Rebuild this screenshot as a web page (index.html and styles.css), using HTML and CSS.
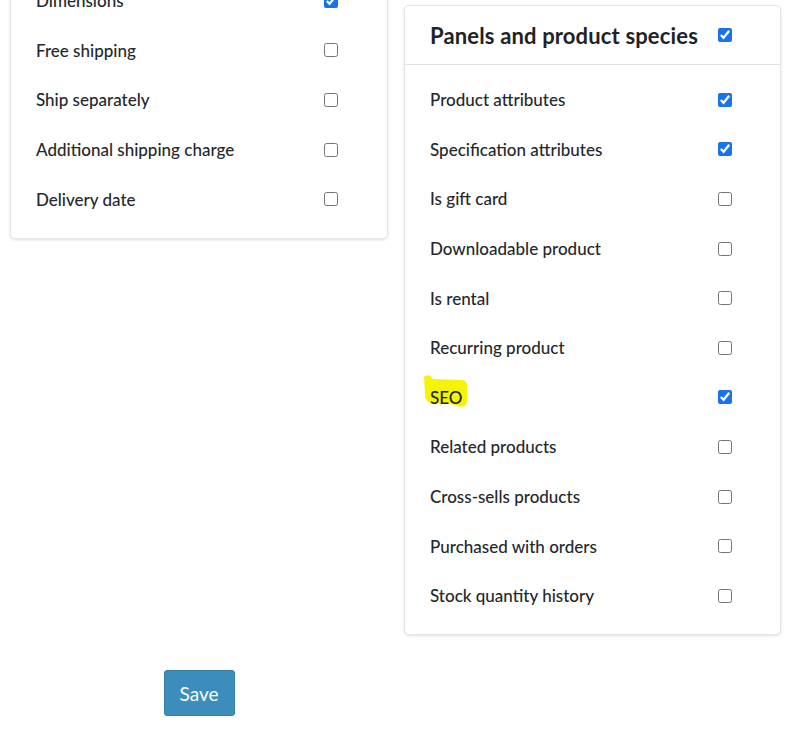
FILE: index.html
```html
<!DOCTYPE html>
<html>
<head>
<meta charset="utf-8">
<link rel="stylesheet" href="styles.css">
</head>
<body>
<div class="page">
  <div class="col col-left">
    <div class="card card-left">
      <div class="card-body">
        <label class="row"><span class="label">Dimensions</span><input type="checkbox" checked></label>
        <label class="row"><span class="label">Free shipping</span><input type="checkbox"></label>
        <label class="row"><span class="label">Ship separately</span><input type="checkbox"></label>
        <label class="row"><span class="label">Additional shipping charge</span><input type="checkbox"></label>
        <label class="row"><span class="label">Delivery date</span><input type="checkbox"></label>
      </div>
    </div>
    <div class="actions"><button class="btn-save" type="button">Save</button></div>
  </div>
  <div class="col col-right">
    <div class="card">
      <div class="card-header">
        <span class="title">Panels and product species</span><input type="checkbox" checked>
      </div>
      <div class="card-body">
        <label class="row"><span class="label">Product attributes</span><input type="checkbox" checked></label>
        <label class="row"><span class="label">Specification attributes</span><input type="checkbox" checked></label>
        <label class="row"><span class="label">Is gift card</span><input type="checkbox"></label>
        <label class="row"><span class="label">Downloadable product</span><input type="checkbox"></label>
        <label class="row"><span class="label">Is rental</span><input type="checkbox"></label>
        <label class="row"><span class="label">Recurring product</span><input type="checkbox"></label>
        <label class="row"><span class="label marked"><svg class="marker" width="50" height="36" viewBox="0 0 50 36"><path d="M3 4 C6 1 10 2 12 6 L40 7 C45 7 47 10 46 16 C47 24 47 30 44 33 C38 35 34 32 30 31 L10 30 C6 29 4 26 4 22 Z" fill="#f6f30a"/></svg><span class="mtext">SEO</span></span><input type="checkbox" checked></label>
        <label class="row"><span class="label">Related products</span><input type="checkbox"></label>
        <label class="row"><span class="label">Cross-sells products</span><input type="checkbox"></label>
        <label class="row"><span class="label">Purchased with orders</span><input type="checkbox"></label>
        <label class="row"><span class="label">Stock quantity history</span><input type="checkbox"></label>
      </div>
    </div>
  </div>
</div>
</body>
</html>
```
FILE: styles.css
```css
html, body {
  margin: 0;
  padding: 0;
  background: #ffffff;
  overflow: hidden;
}
body {
  font-family: "Lato", "Noto Sans", sans-serif;
  color: #24272b;
}
.page {
  display: grid;
  grid-template-columns: 378px 377px;
  column-gap: 16px;
  padding: 0 10px;
  align-items: start;
}
.col-left {
  margin-top: -40px;
}
.col-right {
  padding-top: 5px;
}
.card {
  background: #fff;
  border: 1px solid #e3e5e8;
  border-radius: 5px;
  box-shadow: 0 1px 3px rgba(0, 0, 0, 0.12);
}
.card-header {
  height: 58px;
  display: flex;
  align-items: center;
  padding: 0 25px;
  border-bottom: 1px solid #dfe1e4;
}
.title {
  font-size: 22px;
  font-weight: 700;
  color: #1f2226;
  width: 288px;
  letter-spacing: 0.15px;
}
.card-body {
  padding: 10px 25px 13px 25px;
}
.card-left .card-body {
  padding-top: 15px;
  padding-bottom: 14px;
}
.row {
  display: flex;
  align-items: center;
  height: 49.6px;
  font-size: 17px;
  font-weight: 500;
}
.label {
  width: 288px;
  position: relative;
}
input[type="checkbox"] {
  width: 14px;
  height: 14px;
  margin: 0;
  accent-color: #1a73e8;
}
.marked {
  display: inline-block;
}
.marker {
  position: absolute;
  left: -9px;
  top: -14px;
}
.mtext {
  position: relative;
}
.actions {
  display: flex;
  justify-content: center;
  padding-top: 431.5px;
}
.btn-save {
  width: 71px;
  height: 46px;
  background: #3c8dbc;
  border: 1px solid #367fa9;
  border-radius: 3px;
  color: #fff;
  font-family: "Lato", "Noto Sans", sans-serif;
  font-size: 19px;
  padding: 0;
}
```
